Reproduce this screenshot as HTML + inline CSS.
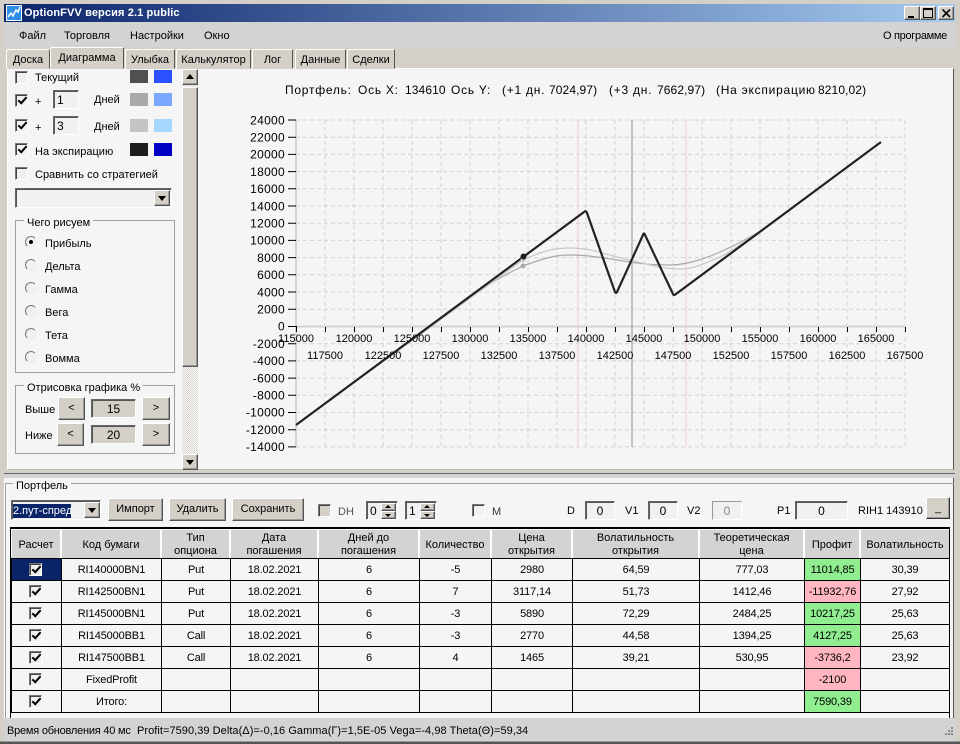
<!DOCTYPE html>
<html><head><meta charset="utf-8"><style>
html,body{margin:0;padding:0}
body{width:960px;height:744px;overflow:hidden;position:relative;background:#d4d0c8;font:11px "Liberation Sans","DejaVu Sans",sans-serif;color:#000}
div,span{box-sizing:border-box}
.a{position:absolute}
.t{position:absolute;white-space:nowrap;line-height:14px;height:14px;margin-top:1px}
.cb{position:absolute;width:13px;height:13px;background:#f1f1f1;border:1px solid;border-color:#777 #fff #fff #777;box-shadow:inset 1px 1px 0 #444}
.cb.c::after{content:"";position:absolute;left:2px;top:2px;width:7px;height:3px;border-left:2px solid #000;border-bottom:2px solid #000;transform:rotate(-48deg)}
.sw{position:absolute;width:18px;height:13px}
.in{position:absolute;border:1px solid;border-color:#666 #fff #fff #666;box-shadow:inset 1px 1px 0 #555;background:#f1f1f1;text-align:center;line-height:19px;font-size:12px}
.bt{position:absolute;background:#d4d0c8;border:1px solid;border-color:#fff #555 #555 #fff;box-shadow:inset -1px -1px 0 #999;text-align:center;line-height:21px}
.gr{position:absolute;border:1px solid #a0a0a0}
.rd{position:absolute;left:25px;width:12px;height:12px;border-radius:50%;background:#f1f1f1;border:1px solid;border-color:#777 #eee #eee #777}
.tab{position:absolute;top:49px;height:20px;background:#d4d0c8;border:1px solid;border-color:#fff #555 #d4d0c8 #fff;border-radius:2px 2px 0 0;text-align:center;line-height:21px}
.hd{position:absolute;top:530px;height:28px;padding-top:2px;background:#d3d3d3;border-right:2px solid #fff;text-align:center;line-height:13px;display:flex;align-items:center;justify-content:center}
table{position:absolute;left:11px;top:558px;width:938px;border-collapse:collapse;table-layout:fixed;background:#f5f5f5}
td{border:1px solid #000;height:19px;padding:2px 0 0;text-align:center;font-size:11px;letter-spacing:-.15px;position:relative;overflow:hidden;line-height:19px}
td .cb{left:17px;top:4px;background:#efefef}
.g{background:#90ee90}.p{background:#ffb6c1}
.ar{position:absolute;width:0;height:0;border-left:4px solid transparent;border-right:4px solid transparent}
.h{font-size:12px;letter-spacing:.75px}
.n{font-size:12px;letter-spacing:.1px}
</style></head><body>

<!-- window frame -->
<div class="a" style="left:4px;top:4px;width:951px;height:18px;background:linear-gradient(90deg,#0a246a,#a6caf0)"></div>
<svg class="a" style="left:6px;top:5px" width="16" height="16"><rect width="16" height="16" fill="#fff"/><rect x="1" y="1" width="14" height="14" fill="#2f8ee8"/><path d="M2 12L5 8L7 11L10 5L12 7L14 2" fill="none" stroke="#fff" stroke-width="1.5"/></svg>
<div class="t" style="left:24px;top:5px;color:#fff;font-weight:bold;font-size:11px;letter-spacing:.12px">OptionFVV версия 2.1 public</div>
<div class="bt" style="left:904px;top:6px;width:16px;height:14px"><div class="a" style="left:3px;top:9px;width:6px;height:2px;background:#000"></div></div>
<div class="bt" style="left:920px;top:6px;width:16px;height:14px"><div class="a" style="left:2px;top:1px;width:10px;height:10px;border:1px solid #000;border-top-width:2px"></div></div>
<div class="bt" style="left:938px;top:6px;width:16px;height:14px"><svg class="a" style="left:3px;top:2px" width="9" height="9"><path d="M0.5 0.5L8 8M8 0.5L0.5 8" stroke="#000" stroke-width="1.6"/></svg></div>

<!-- menu -->
<div class="a" style="left:4px;top:22px;width:951px;height:25px;background:#d3d3d3"></div>
<div class="t" style="left:19px;top:28px">Файл</div>
<div class="t" style="left:64px;top:28px">Торговля</div>
<div class="t" style="left:130px;top:28px">Настройки</div>
<div class="t" style="left:204px;top:28px">Окно</div>
<div class="t" style="left:883px;top:28px;letter-spacing:-.3px">О программе</div>

<!-- main panel -->
<div class="a" style="left:7px;top:68px;width:947px;height:402px;background:#f5f5f5;border:1px solid;border-color:#fff #555 #bbb #fff"></div>
<div class="a" style="left:4px;top:473px;width:951px;height:1px;background:#666"></div>
<div class="a" style="left:4px;top:474px;width:951px;height:4px;background:#d3d3d3"></div>

<!-- tabs -->
<div class="tab" style="left:6px;width:44px">Доска</div>
<div class="tab" style="left:50px;top:47px;width:74px;height:22px;z-index:2;line-height:21px">Диаграмма</div>
<div class="tab" style="left:125px;width:50px">Улыбка</div>
<div class="tab" style="left:176px;width:75px">Калькулятор</div>
<div class="tab" style="left:252px;width:41px">Лог</div>
<div class="tab" style="left:295px;width:51px">Данные</div>
<div class="tab" style="left:347px;width:48px">Сделки</div>

<!-- left controls -->
<div class="cb" style="left:15px;top:71px"></div>
<div class="t" style="left:35px;top:70px">Текущий</div>
<div class="sw" style="left:130px;top:70px;background:#505050"></div><div class="sw" style="left:154px;top:70px;background:#2a50ff"></div>

<div class="cb c" style="left:15px;top:94px"></div>
<div class="t" style="left:35px;top:94px">+</div>
<div class="in" style="left:53px;top:90px;width:26px;height:19px;text-align:left;padding-left:3px">1</div>
<div class="t" style="left:94px;top:92px">Дней</div>
<div class="sw" style="left:130px;top:93px;background:#a9a9a9"></div><div class="sw" style="left:154px;top:93px;background:#7aa7ff"></div>

<div class="cb c" style="left:15px;top:119px"></div>
<div class="t" style="left:35px;top:120px">+</div>
<div class="in" style="left:53px;top:116px;width:26px;height:19px;text-align:left;padding-left:3px">3</div>
<div class="t" style="left:94px;top:119px">Дней</div>
<div class="sw" style="left:130px;top:119px;background:#c4c4c4"></div><div class="sw" style="left:154px;top:119px;background:#a6d8ff"></div>

<div class="cb c" style="left:15px;top:143px"></div>
<div class="t" style="left:35px;top:144px">На экспирацию</div>
<div class="sw" style="left:130px;top:143px;background:#1e1e1e"></div><div class="sw" style="left:154px;top:143px;background:#0000c4"></div>

<div class="cb" style="left:15px;top:167px"></div>
<div class="t" style="left:35px;top:167px">Сравнить со стратегией</div>

<div class="in" style="left:15px;top:188px;width:157px;height:20px"></div>
<div class="bt" style="left:154px;top:190px;width:16px;height:16px"><div class="ar" style="left:3px;top:5px;border-top:5px solid #000"></div></div>

<div class="gr" style="left:15px;top:220px;width:160px;height:153px"></div>
<div class="t" style="left:24px;top:215px;background:#f5f5f5;padding:0 3px">Чего рисуем</div>
<div class="rd" style="top:236px"><div class="a" style="left:3px;top:3px;width:4px;height:4px;border-radius:50%;background:#000"></div></div>
<div class="rd" style="top:259px"></div><div class="rd" style="top:282px"></div><div class="rd" style="top:305px"></div><div class="rd" style="top:328px"></div><div class="rd" style="top:351px"></div>
<div class="t" style="left:45px;top:236px">Прибыль</div>
<div class="t" style="left:45px;top:259px">Дельта</div>
<div class="t" style="left:45px;top:282px">Гамма</div>
<div class="t" style="left:45px;top:305px">Вега</div>
<div class="t" style="left:45px;top:328px">Тета</div>
<div class="t" style="left:45px;top:351px">Вомма</div>

<div class="gr" style="left:15px;top:385px;width:160px;height:69px"></div>
<div class="t" style="left:24px;top:380px;background:#f5f5f5;padding:0 3px">Отрисовка графика %</div>
<div class="t" style="left:25px;top:402px">Выше</div>
<div class="t" style="left:25px;top:428px">Ниже</div>
<div class="bt" style="left:58px;top:397px;width:27px;height:23px">&lt;</div>
<div class="bt" style="left:142px;top:397px;width:28px;height:23px">&gt;</div>
<div class="bt" style="left:57px;top:423px;width:27px;height:23px">&lt;</div>
<div class="bt" style="left:142px;top:423px;width:28px;height:23px">&gt;</div>
<div class="in" style="left:91px;top:399px;width:45px;height:19px;background:#d4d0c8">15</div>
<div class="in" style="left:91px;top:425px;width:45px;height:19px;background:#d4d0c8">20</div>

<!-- scrollbar -->
<div class="a" style="left:182px;top:69px;width:16px;height:401px;background:repeating-conic-gradient(#d4d0c8 0 25%,#fff 0 50%) 0 0/2px 2px"></div>
<div class="bt" style="left:182px;top:69px;width:16px;height:16px"><div class="ar" style="left:3px;top:4px;border-bottom:5px solid #000"></div></div>
<div class="bt" style="left:182px;top:87px;width:16px;height:280px"></div>
<div class="bt" style="left:182px;top:454px;width:16px;height:16px"><div class="ar" style="left:3px;top:5px;border-top:5px solid #000"></div></div>

<!-- chart -->
<div class="t h" style="left:285px;top:82px">Портфель:</div>
<div class="t h" style="left:358px;top:82px">Ось X:</div>
<div class="t n" style="left:405px;top:82px">134610</div>
<div class="t h" style="left:451px;top:82px">Ось Y:</div>
<div class="t h" style="left:502px;top:82px">(+1 дн.</div>
<div class="t n" style="left:549px;top:82px">7024,97)</div>
<div class="t h" style="left:609px;top:82px">(+3 дн.</div>
<div class="t n" style="left:657px;top:82px">7662,97)</div>
<div class="t h" style="left:716px;top:82px">(На экспирацию</div>
<div class="t n" style="left:818px;top:82px">8210,02)</div>
<svg class="a" style="left:0;top:0" width="960" height="480" font-family="Liberation Sans,sans-serif" font-size="12">
<path d="M296 120H905M296 137.2H905M296 154.4H905M296 171.6H905M296 188.8H905M296 206H905M296 223.2H905M296 240.4H905M296 257.6H905M296 274.8H905M296 292H905M296 309.2H905M296 343.7H905M296 360.9H905M296 378.1H905M296 395.3H905M296 412.5H905M296 429.7H905M296 446.9H905M325 120V447M354 120V447M383 120V447M412 120V447M441 120V447M470 120V447M499 120V447M528 120V447M557 120V447M586 120V447M615 120V447M644 120V447M673 120V447M702 120V447M731 120V447M760 120V447M789 120V447M818 120V447M847 120V447M876 120V447M905 120V447" stroke="#d4d4d4" stroke-dasharray="4 3" fill="none"/>
<path d="M296 120V447M296 326.5H905" stroke="#d3d3d3" stroke-width="2" fill="none"/>
<path d="M288 120H296M288 137.2H296M288 154.4H296M288 171.6H296M288 188.8H296M288 206H296M288 223.2H296M288 240.4H296M288 257.6H296M288 274.8H296M288 292H296M288 309.2H296M288 326.5H296M288 343.7H296M288 360.9H296M288 378.1H296M288 395.3H296M288 412.5H296M288 429.7H296M288 446.9H296M296.500 326V332M325.500 327V332M354.500 327V332M383.500 327V332M412.500 327V332M441.500 327V332M470.500 327V332M499.500 327V332M528.500 327V332M557.500 327V332M586.500 327V332M615.500 327V332M644.500 327V332M673.500 327V332M702.500 327V332M731.500 327V332M760.500 327V332M789.500 327V332M818.500 327V332M847.500 327V332M876.500 327V332M905.500 327V332" stroke="#000" fill="none"/>
<path d="M578 120V447M686 120V447" stroke="#f7c8d0"/>
<path d="M632 120V447" stroke="#8a8f98"/>
<path d="M480 290C500 277 523 266 523 266C545 258 555 255 570 255C590 255 610 259 630 262C650 265 660 265 670 265C690 265 713 255 713 255C730 248 745 240 757 233" fill="none" stroke="#a9a9a9" stroke-width="1.2"/>
<path d="M296 425L480 291L523 260C545 250 555 248 570 248C595 248 612 257 630 260C650 265 665 269 680 269C695 269 708 262 720 257C735 250 746 240 757 233" fill="none" stroke="#c8c8c8" stroke-width="1.2"/>
<path d="M296 425L584 212Q586 210 587 213L615 292Q616 294 617 292L643 235Q644 232 645 235L673 294Q674 296 676 294L881 142" fill="none" stroke="#222" stroke-width="2.2"/>
<circle cx="523" cy="266" r="2.5" fill="#a9a9a9"/><circle cx="523" cy="260" r="2.5" fill="#c8c8c8"/><circle cx="523.500" cy="256.500" r="3" fill="#1e1e1e"/>
<g text-anchor="end" letter-spacing=".3">
<text x="285" y="124.500">24000</text><text x="285" y="141.500">22000</text><text x="285" y="158.500">20000</text><text x="285" y="176">18000</text><text x="285" y="193">16000</text><text x="285" y="210.500">14000</text><text x="285" y="227.500">12000</text><text x="285" y="244.500">10000</text><text x="285" y="262">8000</text><text x="285" y="279">6000</text><text x="285" y="296.500">4000</text><text x="285" y="313.500">2000</text><text x="285" y="330.500">0</text><text x="285" y="348">-2000</text><text x="285" y="365">-4000</text><text x="285" y="382.500">-6000</text><text x="285" y="399.500">-8000</text><text x="285" y="416.500">-10000</text><text x="285" y="434">-12000</text><text x="285" y="451">-14000</text>
</g>
<g text-anchor="middle" font-size="11">
<text x="296" y="342">115000</text><text x="354" y="342">120000</text><text x="412" y="342">125000</text><text x="470" y="342">130000</text><text x="528" y="342">135000</text><text x="586" y="342">140000</text><text x="644" y="342">145000</text><text x="702" y="342">150000</text><text x="760" y="342">155000</text><text x="818" y="342">160000</text><text x="876" y="342">165000</text>
<text x="325" y="359">117500</text><text x="383" y="359">122500</text><text x="441" y="359">127500</text><text x="499" y="359">132500</text><text x="557" y="359">137500</text><text x="615" y="359">142500</text><text x="673" y="359">147500</text><text x="731" y="359">152500</text><text x="789" y="359">157500</text><text x="847" y="359">162500</text><text x="905" y="359">167500</text>
</g>
</svg>

<!-- bottom panel -->
<div class="a" style="left:4px;top:478px;width:950px;height:240px;background:#f5f5f5;border-left:1px solid #fff;border-right:1px solid #555"></div>
<div class="a" style="left:5px;top:483px;width:949px;height:1px;background:#a0a0a0"></div>
<div class="a" style="left:5px;top:483px;width:1px;height:235px;background:#a0a0a0"></div>
<div class="t" style="left:13px;top:478px;background:#f5f5f5;padding:0 3px">Портфель</div>

<div class="in" style="left:11px;top:500px;width:90px;height:20px"></div>
<div class="t" style="left:13px;top:503px;background:#0a246a;color:#fff;width:58px">2.пут-спред</div>
<div class="bt" style="left:84px;top:502px;width:16px;height:16px"><div class="ar" style="left:3px;top:5px;border-top:5px solid #000"></div></div>
<div class="bt" style="left:108px;top:498px;width:55px;height:23px">Импорт</div>
<div class="bt" style="left:169px;top:498px;width:57px;height:23px">Удалить</div>
<div class="bt" style="left:232px;top:498px;width:72px;height:23px">Сохранить</div>
<div class="cb" style="left:318px;top:504px;background:#d4d0c8"></div>
<div class="t" style="left:338px;top:504px;color:#555">DH</div>
<div class="in" style="left:366px;top:501px;width:32px;height:19px;text-align:left;padding-left:3px">0</div>
<div class="bt" style="left:381px;top:503px;width:15px;height:8px"><div class="ar" style="left:3px;top:1px;border-width:0 3px 3px;border-bottom:3px solid #000"></div></div>
<div class="bt" style="left:381px;top:511px;width:15px;height:8px"><div class="ar" style="left:3px;top:2px;border-width:3px 3px 0;border-top:3px solid #000"></div></div>
<div class="in" style="left:405px;top:501px;width:32px;height:19px;text-align:left;padding-left:3px">1</div>
<div class="bt" style="left:420px;top:503px;width:15px;height:8px"><div class="ar" style="left:3px;top:1px;border-width:0 3px 3px;border-bottom:3px solid #000"></div></div>
<div class="bt" style="left:420px;top:511px;width:15px;height:8px"><div class="ar" style="left:3px;top:2px;border-width:3px 3px 0;border-top:3px solid #000"></div></div>
<div class="cb" style="left:472px;top:504px"></div>
<div class="t" style="left:492px;top:504px;color:#333">M</div>
<div class="t" style="left:567px;top:503px">D</div>
<div class="in" style="left:585px;top:501px;width:30px;height:19px">0</div>
<div class="t" style="left:625px;top:503px">V1</div>
<div class="in" style="left:648px;top:501px;width:30px;height:19px">0</div>
<div class="t" style="left:687px;top:503px">V2</div>
<div class="in" style="left:712px;top:501px;width:30px;height:19px;color:#888;border-color:#999 #fff #fff #999;box-shadow:none">0</div>
<div class="t" style="left:777px;top:503px">P1</div>
<div class="in" style="left:795px;top:501px;width:53px;height:19px">0</div>
<div class="t" style="left:858px;top:503px">RIH1 143910</div>
<div class="bt" style="left:926px;top:497px;width:24px;height:22px;border-color:#fff #333 #333 #fff">_</div>

<!-- table -->
<div class="a" style="left:10px;top:527px;width:940px;height:191px;border:1px solid #000;border-bottom:0;background:#f5f5f5;border-top-width:2px"></div>
<div class="hd" style="left:12px;width:50px">Расчет</div>
<div class="hd" style="left:62px;width:100px">Код бумаги</div>
<div class="hd" style="left:162px;width:69px">Тип<br>опциона</div>
<div class="hd" style="left:231px;width:88px">Дата<br>погашения</div>
<div class="hd" style="left:319px;width:101px">Дней до<br>погашения</div>
<div class="hd" style="left:420px;width:72px">Количество</div>
<div class="hd" style="left:492px;width:81px">Цена<br>открытия</div>
<div class="hd" style="left:573px;width:127px">Волатильность<br>открытия</div>
<div class="hd" style="left:700px;width:105px">Теоретическая<br>цена</div>
<div class="hd" style="left:805px;width:56px">Профит</div>
<div class="hd" style="left:861px;width:88px;border-right:0">Волатильность</div>

<table>
<colgroup><col style="width:50px"><col style="width:100px"><col style="width:69px"><col style="width:88px"><col style="width:101px"><col style="width:72px"><col style="width:81px"><col style="width:127px"><col style="width:105px"><col style="width:56px"><col style="width:89px"></colgroup>
<tr><td style="background:#0a246a"><div class="cb c"></div></td><td>RI140000BN1</td><td>Put</td><td>18.02.2021</td><td>6</td><td>-5</td><td>2980</td><td>64,59</td><td>777,03</td><td class="g">11014,85</td><td>30,39</td></tr>
<tr><td><div class="cb c"></div></td><td>RI142500BN1</td><td>Put</td><td>18.02.2021</td><td>6</td><td>7</td><td>3117,14</td><td>51,73</td><td>1412,46</td><td class="p">-11932,76</td><td>27,92</td></tr>
<tr><td><div class="cb c"></div></td><td>RI145000BN1</td><td>Put</td><td>18.02.2021</td><td>6</td><td>-3</td><td>5890</td><td>72,29</td><td>2484,25</td><td class="g">10217,25</td><td>25,63</td></tr>
<tr><td><div class="cb c"></div></td><td>RI145000BB1</td><td>Call</td><td>18.02.2021</td><td>6</td><td>-3</td><td>2770</td><td>44,58</td><td>1394,25</td><td class="g">4127,25</td><td>25,63</td></tr>
<tr><td><div class="cb c"></div></td><td>RI147500BB1</td><td>Call</td><td>18.02.2021</td><td>6</td><td>4</td><td>1465</td><td>39,21</td><td>530,95</td><td class="p">-3736,2</td><td>23,92</td></tr>
<tr><td><div class="cb c"></div></td><td>FixedProfit</td><td></td><td></td><td></td><td></td><td></td><td></td><td></td><td class="p">-2100</td><td></td></tr>
<tr><td><div class="cb c"></div></td><td>Итого:</td><td></td><td></td><td></td><td></td><td></td><td></td><td></td><td class="g">7590,39</td><td></td></tr>
</table>

<!-- status bar -->
<div class="a" style="left:4px;top:718px;width:951px;height:23px;background:#d3d3d3"></div>
<div class="t" style="left:7px;top:723px;letter-spacing:-.22px">Время обновления 40 мс</div>
<div class="t" style="left:137px;top:723px;letter-spacing:.05px">Profit=7590,39 Delta(Δ)=-0,16 Gamma(Г)=1,5E-05 Vega=-4,98 Theta(Θ)=59,34</div>
<svg class="a" style="left:942px;top:726px" width="12" height="12"><path d="M9 1h2v2h-2zM6 4h2v2h-2zM9 4h2v2h-2zM3 7h2v2h-2zM6 7h2v2h-2zM9 7h2v2h-2z" fill="#888"/></svg>
<div class="a" style="left:0;top:741px;width:960px;height:3px;background:#555;border-top:1px solid #999"></div>
</body></html>
